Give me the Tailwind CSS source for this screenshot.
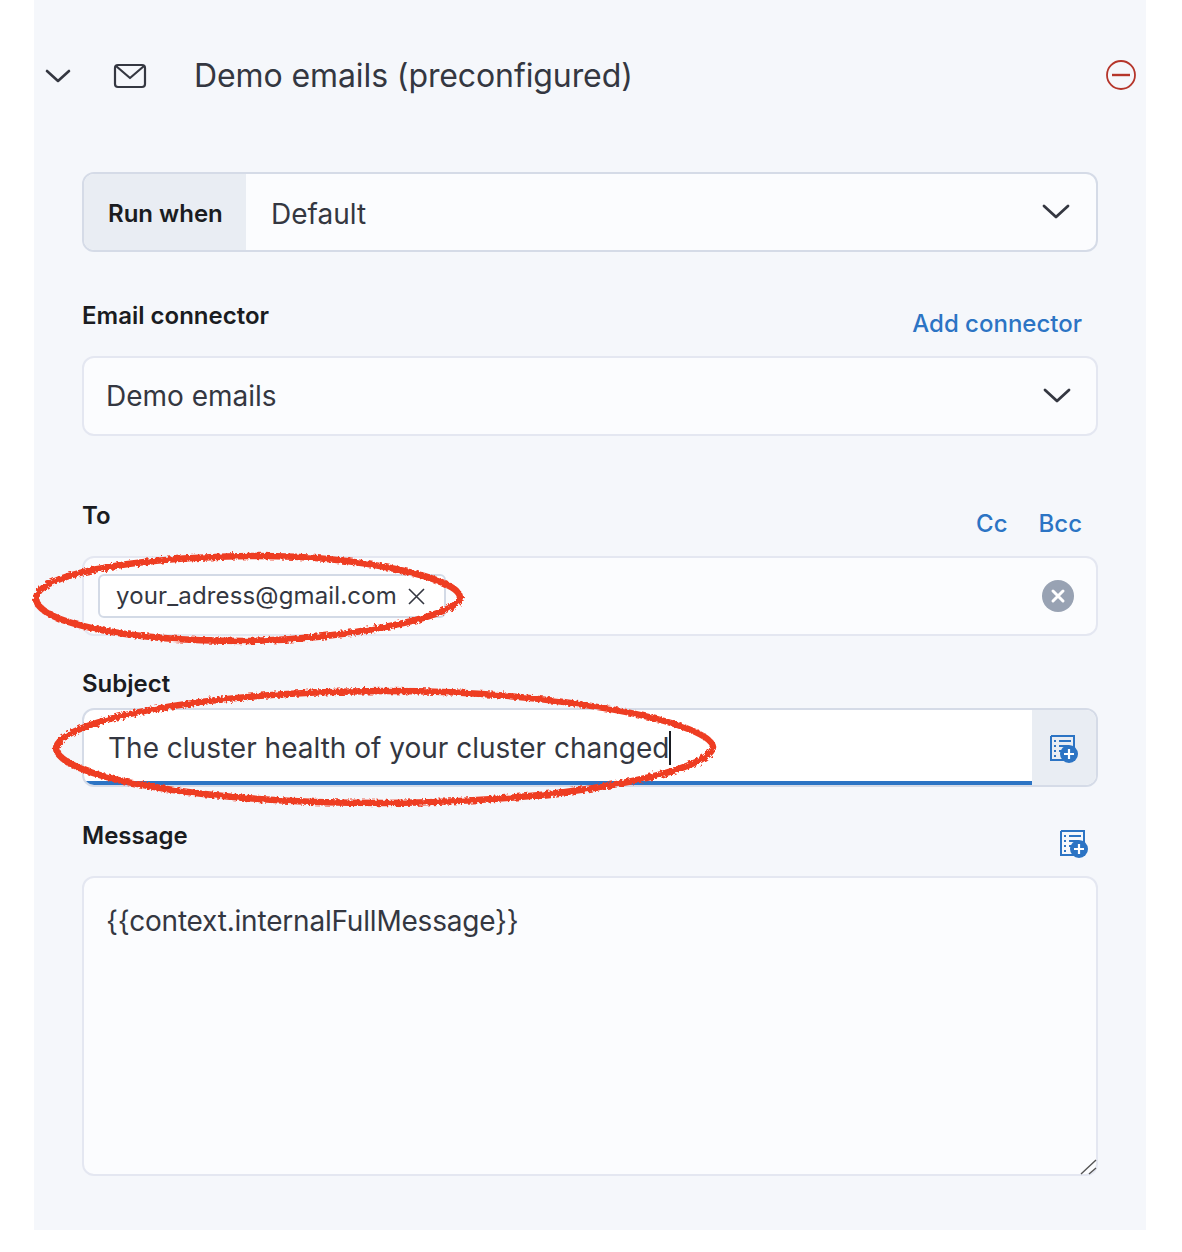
<!DOCTYPE html>
<html lang="en">
  <head>
    <meta charset="UTF-8" />
    <title>Demo emails</title>
    <script src="https://cdn.jsdelivr.net/npm/@tailwindcss/browser@4"></script>
  </head>
  <body class="bg-white font-['Inter',sans-serif] text-[#343741]">
    <div class="relative w-[1182px] h-[1252px]">
      <main class="ml-[34px] w-[1112px] h-[1230px] bg-[#f5f7fb]">
        <!-- header -->
        <header class="flex items-center h-[150px] pl-[11px] pr-[10px]">
          <svg class="mt-[1px] w-[26px] h-[16px]" viewBox="0 0 26 16" fill="none" stroke="#343741" stroke-width="2.6" stroke-linecap="round" stroke-linejoin="round"><path d="M2 3l11 10L24 3" /></svg>
          <svg class="mt-[1px] ml-[42px] w-[34px] h-[26px]" viewBox="0 0 34 26" fill="none" stroke="#343741" stroke-width="2.2" stroke-linejoin="round"><rect x="2" y="2" width="30" height="22" rx="3" /><path d="M3 3l14 12L31 3" /></svg>
          <h1 class="mt-[2px] ml-[47px] text-[32px] leading-none tracking-[-0.1px]">Demo emails (preconfigured)</h1>
          <svg class="ml-auto w-[30px] h-[30px]" viewBox="0 0 30 30" fill="none" stroke="#b5352a"><circle cx="15" cy="15" r="14" stroke-width="1.8" /><path d="M6 15h18" stroke-width="2.4" /></svg>
        </header>

        <form class="ml-[48px] w-[1016px] pt-[22px]">
          <!-- run when -->
          <div class="flex h-[80px] rounded-[12px] border-2 border-[#d5dbe7] overflow-hidden bg-[#fbfcfe]">
            <div class="w-[162px] flex items-center pl-[24px] pt-[4px] bg-[#e9edf3] text-[24px] font-semibold text-[#1a1c21]">Run when</div>
            <div class="flex-1 flex items-center pl-[25px] pt-[4px] text-[28px]">Default</div>
            <svg class="self-center mr-[26px] w-[28px] h-[16px]" viewBox="0 0 28 16" fill="none" stroke="#343741" stroke-width="2.8" stroke-linecap="round" stroke-linejoin="round"><path d="M2 2l12 11L26 2" /></svg>
          </div>

          <!-- connector -->
          <div class="flex justify-between mt-[49px] h-[55px]">
            <label class="text-[24px] leading-[30px] font-semibold text-[#1a1c21]">Email connector</label>
            <a class="pr-[16px] pt-[8px] text-[24px] leading-[30px] font-medium text-[#2c74c4]">Add connector</a>
          </div>
          <div class="flex items-center justify-between h-[80px] pl-[22px] pr-[25px] rounded-[12px] border-2 border-[#e4e7f1] bg-[#fbfcfe] text-[28px]">
            Demo emails
            <svg class="w-[28px] h-[16px]" viewBox="0 0 28 16" fill="none" stroke="#343741" stroke-width="2.8" stroke-linecap="round" stroke-linejoin="round"><path d="M2 2l12 11L26 2" /></svg>
          </div>

          <!-- to -->
          <div class="flex justify-between mt-[65px] h-[55px]">
            <label class="text-[24px] leading-[30px] font-semibold text-[#1a1c21]">To</label>
            <div class="flex gap-[31px] pr-[16px] pt-[8px] text-[24px] leading-[30px] font-medium text-[#2c74c4]"><a>Cc</a><a>Bcc</a></div>
          </div>
          <div class="flex items-center justify-between h-[80px] pl-[14px] pr-[22px] rounded-[12px] border-2 border-[#e4e7f1] bg-[#fbfcfe]">
            <div class="flex items-center h-[44px] w-[348px] pl-[16px] rounded-[6px] border-2 border-[#d3dae6] bg-white text-[24px] tracking-[0.15px]">
              <span class="-mt-[1px]">your_adress@gmail.com</span>
              <svg class="ml-[11px] w-[17px] h-[17px]" viewBox="0 0 17 17" fill="none" stroke="#343741" stroke-width="1.6"><path d="M1 1l15 15M16 1L1 16" /></svg>
            </div>
            <svg class="w-[32px] h-[32px]" viewBox="0 0 32 32"><circle cx="16" cy="16" r="16" fill="#98a2b3" /><path d="M11 11l10 10M21 11L11 21" stroke="#fff" stroke-width="3" stroke-linecap="round" /></svg>
          </div>

          <!-- subject -->
          <label class="block mt-[33px] h-[39px] text-[24px] leading-[30px] font-semibold text-[#1a1c21]">Subject</label>
          <div class="flex h-[79px] rounded-[12px] border-2 border-[#d5dbe7] overflow-hidden bg-white">
            <div class="flex-1 flex items-center pl-[24px] pt-[4px] border-b-[4px] border-[#2c74c4] text-[28px]">
              The cluster health of your cluster changed<span class="w-[2px] h-[34px] bg-[#1a1c21]"></span>
            </div>
            <div class="w-[64px] flex items-center justify-center pt-[2px] bg-[#e9edf3]">
              <svg class="w-[30px] h-[30px]" viewBox="0 0 30 30">
                <path d="M2 2h23v13M14 26H2V2" fill="none" stroke="#2c74c4" stroke-width="2" />
                <path d="M5 7h2M10 7h12M5 12h2M10 12h10M5 17h2M10 17h4M5 22h2" stroke="#2c74c4" stroke-width="2" />
                <circle cx="20" cy="20" r="9" fill="#2c74c4" />
                <path d="M20 15v10M15 20h10" stroke="#fff" stroke-width="2.2" />
              </svg>
            </div>
          </div>

          <!-- message -->
          <div class="flex justify-between mt-[34px] h-[55px]">
            <label class="text-[24px] leading-[30px] font-semibold text-[#1a1c21]">Message</label>
            <svg class="mr-[9px] mt-[8px] w-[30px] h-[30px]" viewBox="0 0 30 30">
              <path d="M2 2h23v13M14 26H2V2" fill="none" stroke="#2c74c4" stroke-width="2" />
              <path d="M5 7h2M10 7h12M5 12h2M10 12h10M5 17h2M10 17h4M5 22h2" stroke="#2c74c4" stroke-width="2" />
              <circle cx="20" cy="20" r="9" fill="#2c74c4" />
              <path d="M20 15v10M15 20h10" stroke="#fff" stroke-width="2.2" />
            </svg>
          </div>
          <div class="relative h-[300px] pl-[22px] pt-[25px] rounded-[12px] border-2 border-[#e4e7f1] bg-[#fbfcfe] text-[28px] leading-[36px] tracking-[-0.2px]">
            {{context.internalFullMessage}}
            <svg class="absolute right-[-2px] bottom-[-1px] w-[18px] h-[16px]" viewBox="0 0 18 16" fill="none" stroke="#555" stroke-width="1.4"><path d="M1 15L16 1M9 15l7-6" /></svg>
          </div>
        </form>
      </main>

      <!-- hand drawn red marks -->
      <svg class="absolute top-0 left-0 pointer-events-none" width="1182" height="1252" fill="none" stroke="#ee3d24" stroke-width="6.5">
        <defs>
          <filter id="rough" x="-5%" y="-20%" width="110%" height="140%">
            <feTurbulence type="fractalNoise" baseFrequency="0.35" numOctaves="2" seed="4" />
            <feDisplacementMap in="SourceGraphic" scale="5" />
          </filter>
        </defs>
        <g filter="url(#rough)">
          <path d="M36 598C38 576 120 558 250 556C360 555 458 578 460 597C458 618 340 640 245 641C120 641 36 622 36 598Z" />
          <path d="M56 748C60 722 190 692 385 691C560 691 710 722 713 747C710 772 570 802 385 803C190 803 58 776 56 748Z" />
        </g>
      </svg>
    </div>
  </body>
</html>
